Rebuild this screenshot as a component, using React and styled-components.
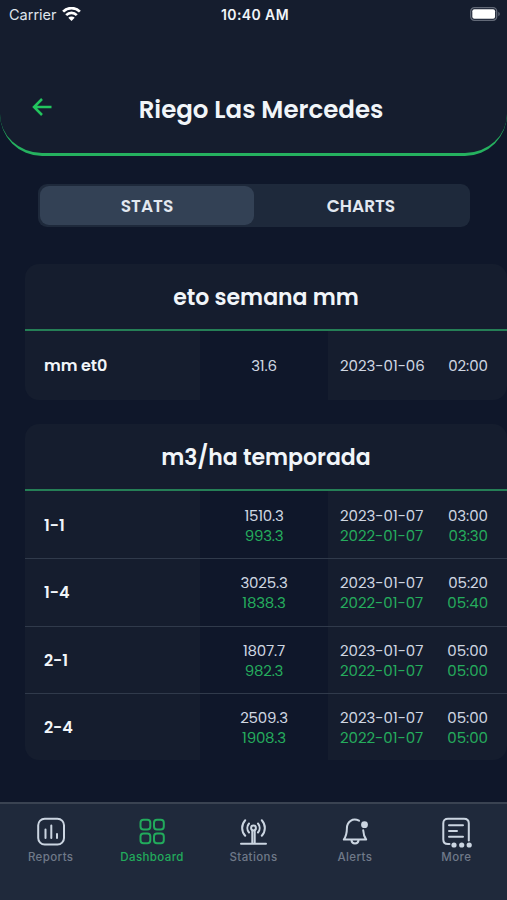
import React from 'react'
import styled, { createGlobalStyle } from 'styled-components'

const GlobalStyle = createGlobalStyle`
    * {
        box-sizing: border-box;
    }
    body {
        margin: 0;
        background-color: #0f172a;
        font-family: Poppins, Inter, sans-serif;
        color: #f1f5f9;
        overflow: hidden;
    }
`
const Container = styled.div`
    width: 507px;
    height: 900px;
    display: flex;
    flex-direction: column;
    overflow: hidden;
    background-color: #0f172a;
`
const Header = styled.div`
    height: 156px;
    flex-shrink: 0;
    background-color: #151d2e;
    border-bottom: 3px solid #25b15f;
    border-radius: 0 0 42px 42px;
`
const StatusBar = styled.div`
    height: 28px;
    padding: 0 6px 0 9px;
    display: grid;
    grid-template-columns: 1fr auto 1fr;
    align-items: center;
    font-family: Inter, sans-serif;
    font-size: 14.5px;
`
const Carrier = styled.div`
    display: flex;
    align-items: center;
    gap: 5px;
    color: #dfe4ec;
`
const Time = styled.div`
    font-size: 14px;
    font-weight: 600;
    letter-spacing: 0.4px;
`
const Battery = styled.div`
    display: flex;
    justify-content: flex-end;
`
const TitleBar = styled.div`
    height: 125px;
    padding: 38px 32px 0;
    display: grid;
    grid-template-columns: 20px 1fr;
    align-items: start;
`
const BackButton = styled.button`
    margin-top: 32px;
    padding: 0;
    border: none;
    background: none;
    display: flex;
`
const Title = styled.h1`
    margin: 26px 0 0 -5px;
    font-size: 24.5px;
    font-weight: 600;
    line-height: 36px;
    text-align: center;
    white-space: nowrap;
`
const Tabs = styled.div`
    margin: 28px 37px 0 38px;
    height: 43px;
    flex-shrink: 0;
    padding: 2px;
    display: flex;
    border-radius: 9px;
    background-color: #1e293b;
`
const Tab = styled.button`
    flex: 1;
    padding: 0;
    border: none;
    border-radius: 9px;
    background-color: ${props => props.$active ? '#334155' : 'transparent'};
    color: #e2e8f0;
    font-family: inherit;
    font-size: 17px;
    font-weight: 600;
`
const Content = styled.div`
    flex: 1;
    padding: 37px 0 0 25px;
    display: flex;
    flex-direction: column;
    gap: 24px;
`
const Card = styled.div`
    border-radius: 14px;
    overflow: hidden;
    background-color: #151d2e;
`
const CardTitle = styled.h2`
    margin: 0;
    height: 67px;
    border-bottom: 2px solid #257f56;
    font-size: 22px;
    font-weight: 600;
    line-height: 67px;
    text-align: center;
`
const Row = styled.div`
    height: ${props => props.$tall ? '69px' : '67.3px'};
    display: grid;
    grid-template-columns: 175px 128px 1fr;
    border-top: ${props => props.$line ? '1px solid #303a4b' : 'none'};
`
const Name = styled.div`
    padding: ${props => props.$lowered ? '1px' : '0'} 0 0 19px;
    display: flex;
    align-items: center;
    font-size: 16px;
    font-weight: 600;
    letter-spacing: -0.1px;
`
const Value = styled.div`
    padding-top: ${props => props.$lowered ? '2px' : '0'};
    display: flex;
    flex-direction: column;
    align-items: center;
    justify-content: center;
    background-color: #0f172a;
    font-size: 15px;
    line-height: 20px;
    letter-spacing: -0.2px;
    color: #d0d7e2;
`
const Dates = styled.div`
    padding: ${props => props.$lowered ? '2px' : '0'} 19px 0 12px;
    display: flex;
    flex-direction: column;
    justify-content: center;
    font-size: 15px;
    line-height: 20px;
    letter-spacing: -0.05px;
    color: #d0d7e2;
`
const DateLine = styled.div`
    display: flex;
    justify-content: space-between;
    color: ${props => props.$previous ? '#25ac5d' : 'inherit'};
`
const Previous = styled.span`
    color: #25ac5d;
`
const TabBar = styled.nav`
    height: 98px;
    flex-shrink: 0;
    border-top: 2px solid #3a4352;
    background-color: #1f293b;
    display: grid;
    grid-template-columns: repeat(5, 1fr);
`
const TabItem = styled.div`
    padding-top: 11px;
    display: flex;
    flex-direction: column;
    align-items: center;
    color: ${props => props.$active ? '#22ab5c' : '#cbd5e1'};
`
const TabLabel = styled.span`
    margin-top: 2px;
    color: ${props => props.$active ? '#22ab5c' : '#6f7989'};
    font-family: Inter, sans-serif;
    font-size: 11.5px;
    font-weight: 500;
    line-height: 16px;
    letter-spacing: 0.4px;
`
const Icon = styled.svg`
    width: 32px;
    height: 32px;
    overflow: visible;
    fill: none;
    stroke: currentColor;
    stroke-width: 2;
    stroke-linecap: round;
    stroke-linejoin: round;
`

const WifiIcon = () => (
    <svg width="19" height="15" viewBox="0 0 19 15" fill="none" stroke="#fff" strokeWidth="2.7">
        <path d="M1.1 4.600a11.900 11.900 0 0 1 16.800 0" />
        <path d="M4.2 8.100a7.500 7.500 0 0 1 10.600 0" />
        <path d="M9.5 14 6.300 10.800a4.500 4.500 0 0 1 6.400 0z" fill="#fff" stroke="none" />
    </svg>
)

const BatteryIcon = () => (
    <svg width="31" height="14" viewBox="0 0 31 14">
        <rect x="0.7" y="0.7" width="26" height="12.6" rx="3.7" fill="none" stroke="#626977" strokeWidth="1.3" />
        <rect x="2.3" y="2.3" width="22.8" height="9.4" rx="2" fill="#fff" />
        <path d="M28.3 4.800c2 .8 2 3.600 0 4.400z" fill="#626977" />
    </svg>
)

const ArrowIcon = () => (
    <svg width="20" height="18" viewBox="0 0 20 18" fill="none" stroke="#22c55e" strokeWidth="2.5">
        <path d="M19.5 9H2M10 1 2 9l8 8" />
    </svg>
)

const ReportsIcon = () => (
    <Icon viewBox="0 0 32 32">
        <rect x="3.2" y="3.7" width="25.8" height="25.8" rx="6.5" />
        <path d="M10.5 14.500v8.500M16.300 10.500v12.500M22 19v4" />
    </Icon>
)

const DashboardIcon = () => (
    <Icon viewBox="0 0 32 32">
        <rect x="4.5" y="4.7" width="9.8" height="9.8" rx="3" />
        <rect x="18" y="4.7" width="9.8" height="9.8" rx="3" />
        <rect x="4.5" y="18.5" width="9.8" height="9.8" rx="3" />
        <rect x="18" y="18.5" width="9.8" height="9.8" rx="3" />
    </Icon>
)

const StationsIcon = () => (
    <Icon viewBox="0 0 32 32">
        <circle cx="16.5" cy="13" r="2.4" />
        <path d="M15.3 15.500v13M17.700 15.500v13M4 28.800h25" />
        <path d="M12 8.500a7 7 0 0 0 0 9M21 8.500a7 7 0 0 1 0 9" />
        <path d="M8.2 5.200a11.500 11.500 0 0 0 0 15.600M24.800 5.200a11.500 11.500 0 0 1 0 15.600" />
    </Icon>
)

const AlertsIcon = () => (
    <Icon viewBox="0 0 32 32">
        <path d="M20 5.700C13.800 2.600 7.900 6.500 7.900 13.300c0 6.200-1.200 8.600-3.100 11.300h22.400c-1.600-2.300-2.800-4.700-3-9.300" />
        <path d="M12.5 25c0 4.600 7 4.600 7 0" />
        <circle cx="25.5" cy="9.7" r="3.4" fill="currentColor" stroke="none" />
    </Icon>
)

const MoreIcon = () => (
    <Icon viewBox="0 0 32 32">
        <path d="M9.5 29H8c-3 0-4.700-1.600-4.700-4.500V8.200c0-2.900 1.700-4.500 4.700-4.500h16c3 0 4.800 1.600 4.800 4.500V25.500" />
        <path d="M9 10.300h14M9 16h8M9 21.700h14" />
        <g fill="currentColor" stroke="none">
            <circle cx="14" cy="30" r="2.6" />
            <circle cx="21.7" cy="30" r="2.6" />
            <circle cx="29.2" cy="30" r="2.6" />
        </g>
    </Icon>
)

const seasonRows = [
    { name: '1-1', value: '1510.3', time: '03:00', prevValue: '993.3', prevTime: '03:30' },
    { name: '1-4', value: '3025.3', time: '05:20', prevValue: '1838.3', prevTime: '05:40' },
    { name: '2-1', value: '1807.7', time: '05:00', prevValue: '982.3', prevTime: '05:00' },
    { name: '2-4', value: '2509.3', time: '05:00', prevValue: '1908.3', prevTime: '05:00' },
]

const tabItems = [
    { label: 'Reports', icon: ReportsIcon },
    { label: 'Dashboard', icon: DashboardIcon, active: true },
    { label: 'Stations', icon: StationsIcon },
    { label: 'Alerts', icon: AlertsIcon },
    { label: 'More', icon: MoreIcon },
]

const App = () => {
    return (
        <Container>
            <GlobalStyle />
            <Header>
                <StatusBar>
                    <Carrier>
                        Carrier
                        <WifiIcon />
                    </Carrier>
                    <Time>10:40 AM</Time>
                    <Battery>
                        <BatteryIcon />
                    </Battery>
                </StatusBar>
                <TitleBar>
                    <BackButton>
                        <ArrowIcon />
                    </BackButton>
                    <Title>Riego Las Mercedes</Title>
                </TitleBar>
            </Header>
            <Tabs>
                <Tab $active>STATS</Tab>
                <Tab>CHARTS</Tab>
            </Tabs>
            <Content>
                <Card>
                    <CardTitle>eto semana mm</CardTitle>
                    <Row $tall>
                        <Name>mm et0</Name>
                        <Value>31.6</Value>
                        <Dates>
                            <DateLine>
                                <span>2023-01-06</span>
                                <span>02:00</span>
                            </DateLine>
                        </Dates>
                    </Row>
                </Card>
                <Card>
                    <CardTitle>m3/ha temporada</CardTitle>
                    {seasonRows.map((row, i) => (
                        <Row key={row.name} $line={i > 0}>
                            <Name $lowered>{row.name}</Name>
                            <Value $lowered>
                                <span>{row.value}</span>
                                <Previous>{row.prevValue}</Previous>
                            </Value>
                            <Dates $lowered>
                                <DateLine>
                                    <span>2023-01-07</span>
                                    <span>{row.time}</span>
                                </DateLine>
                                <DateLine $previous>
                                    <span>2022-01-07</span>
                                    <span>{row.prevTime}</span>
                                </DateLine>
                            </Dates>
                        </Row>
                    ))}
                </Card>
            </Content>
            <TabBar>
                {tabItems.map(item => (
                    <TabItem key={item.label} $active={item.active}>
                        <item.icon />
                        <TabLabel $active={item.active}>{item.label}</TabLabel>
                    </TabItem>
                ))}
            </TabBar>
        </Container>
    )
}

export default App
